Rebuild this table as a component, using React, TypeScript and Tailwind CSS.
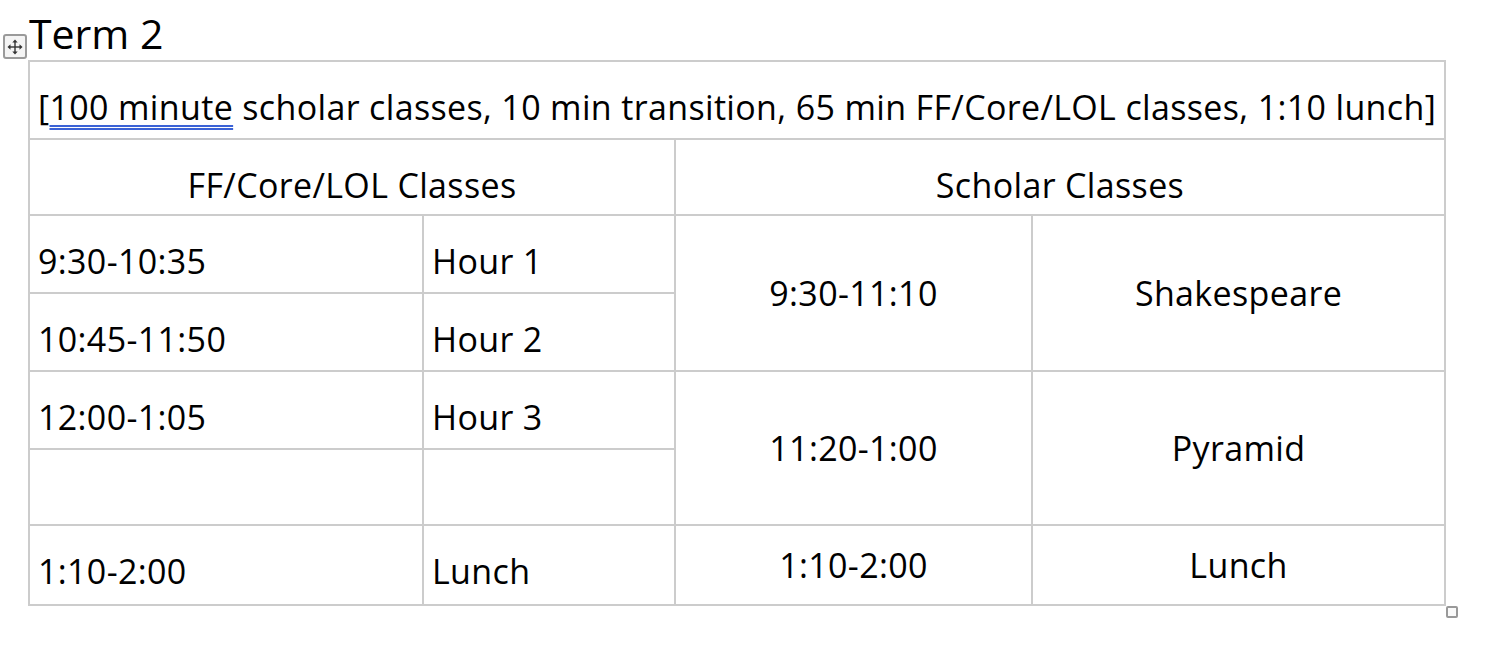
import React from "react";

const cell = "border-2 border-[#cccccc] p-0 align-top";

function Move() {
  return (
    <div className="absolute left-[3px] top-[34px] w-[24px] h-[25px] rounded-[3px] border-2 border-[#9a9a9a] bg-[#f4f4f4] flex items-center justify-center">
      <svg width="16" height="16" viewBox="0 0 16 16" fill="#333">
        <rect x="7.3" y="2.5" width="1.4" height="11" />
        <rect x="2.5" y="7.3" width="11" height="1.4" />
        <polygon points="8,0.5 5.3,3.5 10.7,3.5" />
        <polygon points="8,15.5 5.3,12.5 10.7,12.5" />
        <polygon points="0.5,8 3.5,5.3 3.5,10.7" />
        <polygon points="15.5,8 12.5,5.3 12.5,10.7" />
      </svg>
    </div>
  );
}

export default function App() {
  const txt = "text-[34px] leading-[38px] tracking-[0.35px] text-black";
  return (
    <div className="relative w-[1506px] h-[654px] bg-white" style={{ fontFamily: "'Open Sans', Lato, sans-serif" }}>
      <Move />
      <div className="absolute left-[1446px] top-[606px] w-[12px] h-[12px] rounded-[2px] border-2 border-[#999999] bg-[#fafafa]" />
      <div className="pl-[28px] pt-[6px]">
        <div className="text-[41px] leading-[54px] text-black pl-[1px]">Term 2</div>
        <table className="border-collapse table-fixed w-[1418px]">
          <colgroup>
            <col className="w-[394px]" />
            <col className="w-[252px]" />
            <col className="w-[357px]" />
            <col className="w-[413px]" />
          </colgroup>
          <tbody className={txt}>
            <tr className="h-[78px]">
              <td colSpan={4} className={`${cell} pl-[8px] pt-[26px]`}>
                [<span className="underline decoration-double decoration-[#3b62d6] decoration-[1.5px] underline-offset-[5px]">100 minute</span> scholar classes, 10 min transition, 65 min FF/Core/LOL classes, 1:10 lunch]
              </td>
            </tr>
            <tr className="h-[76px]">
              <td colSpan={2} className={`${cell} text-center pt-[26px]`}>FF/Core/LOL Classes</td>
              <td colSpan={2} className={`${cell} text-center pt-[26px]`}>Scholar Classes</td>
            </tr>
            <tr className="h-[78px]">
              <td className={`${cell} pl-[8px] pt-[26px]`}>9:30-10:35</td>
              <td className={`${cell} pl-[8px] pt-[26px]`}>Hour 1</td>
              <td rowSpan={2} className={`${cell} !align-middle text-center`}>9:30-11:10</td>
              <td rowSpan={2} className={`${cell} !align-middle text-center`}>Shakespeare</td>
            </tr>
            <tr className="h-[78px]">
              <td className={`${cell} pl-[8px] pt-[26px]`}>10:45-11:50</td>
              <td className={`${cell} pl-[8px] pt-[26px]`}>Hour 2</td>
            </tr>
            <tr className="h-[78px]">
              <td className={`${cell} pl-[8px] pt-[26px]`}>12:00-1:05</td>
              <td className={`${cell} pl-[8px] pt-[26px]`}>Hour 3</td>
              <td rowSpan={2} className={`${cell} !align-middle text-center`}>11:20-1:00</td>
              <td rowSpan={2} className={`${cell} !align-middle text-center`}>Pyramid</td>
            </tr>
            <tr className="h-[76px]">
              <td className={cell}></td>
              <td className={cell}></td>
            </tr>
            <tr className="h-[80px]">
              <td className={`${cell} pl-[8px] pt-[26px]`}>1:10-2:00</td>
              <td className={`${cell} pl-[8px] pt-[26px]`}>Lunch</td>
              <td className={`${cell} !align-middle text-center`}>1:10-2:00</td>
              <td className={`${cell} !align-middle text-center`}>Lunch</td>
            </tr>
          </tbody>
        </table>
      </div>
    </div>
  );
}
